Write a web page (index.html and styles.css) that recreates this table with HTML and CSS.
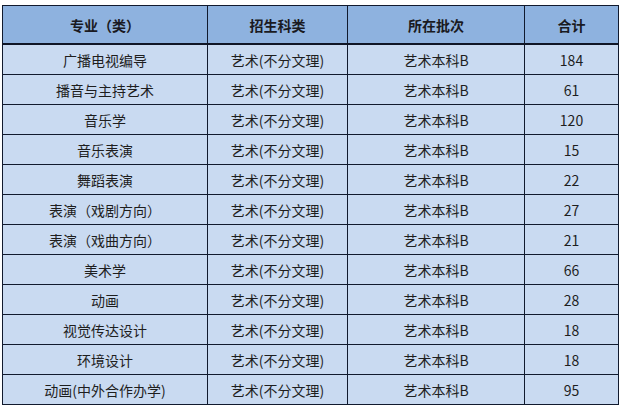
FILE: index.html
```html
<!DOCTYPE html>
<html lang="zh-CN">
<head>
<meta charset="utf-8">
<link rel="stylesheet" href="styles.css">
</head>
<body>
<table class="admit">
  <colgroup>
    <col class="c1"><col class="c2"><col class="c3"><col class="c4">
  </colgroup>
  <thead>
    <tr><th>专业（类）</th><th>招生科类</th><th>所在批次</th><th>合计</th></tr>
  </thead>
  <tbody>
    <tr><td>广播电视编导</td><td>艺术(不分文理)</td><td>艺术本科B</td><td>184</td></tr>
    <tr><td>播音与主持艺术</td><td>艺术(不分文理)</td><td>艺术本科B</td><td>61</td></tr>
    <tr><td>音乐学</td><td>艺术(不分文理)</td><td>艺术本科B</td><td>120</td></tr>
    <tr><td>音乐表演</td><td>艺术(不分文理)</td><td>艺术本科B</td><td>15</td></tr>
    <tr><td>舞蹈表演</td><td>艺术(不分文理)</td><td>艺术本科B</td><td>22</td></tr>
    <tr><td>表演（戏剧方向）</td><td>艺术(不分文理)</td><td>艺术本科B</td><td>27</td></tr>
    <tr><td>表演（戏曲方向）</td><td>艺术(不分文理)</td><td>艺术本科B</td><td>21</td></tr>
    <tr><td>美术学</td><td>艺术(不分文理)</td><td>艺术本科B</td><td>66</td></tr>
    <tr><td>动画</td><td>艺术(不分文理)</td><td>艺术本科B</td><td>28</td></tr>
    <tr><td>视觉传达设计</td><td>艺术(不分文理)</td><td>艺术本科B</td><td>18</td></tr>
    <tr><td>环境设计</td><td>艺术(不分文理)</td><td>艺术本科B</td><td>18</td></tr>
    <tr><td>动画(中外合作办学)</td><td>艺术(不分文理)</td><td>艺术本科B</td><td>95</td></tr>
  </tbody>
</table>
</body>
</html>
```
FILE: styles.css
```css
html, body {
  margin: 0;
  padding: 0;
  background: #ffffff;
}
body {
  padding: 5px 0 0 2px;
  font-family: "Noto Sans CJK SC", "Noto Sans", sans-serif;
}
.admit {
  border-collapse: collapse;
  table-layout: fixed;
  width: 616px;
  font-size: 14px;
  color: #1e1e1e;
}
.c1 { width: 205px; }
.c2 { width: 140px; }
.c3 { width: 177px; }
.c4 { width: 94px; }
.admit th,
.admit td {
  border: 1px solid #111a2e;
  text-align: center;
  padding: 0;
  line-height: 1;
}
.admit th {
  background: #8eb2df;
  height: 37px;
  font-weight: 700;
  color: #1a1a22;
  border-bottom: 2px solid #0f1526;
}
.admit td {
  background: #c9daf1;
  height: 29px;
  font-weight: 400;
}
```
